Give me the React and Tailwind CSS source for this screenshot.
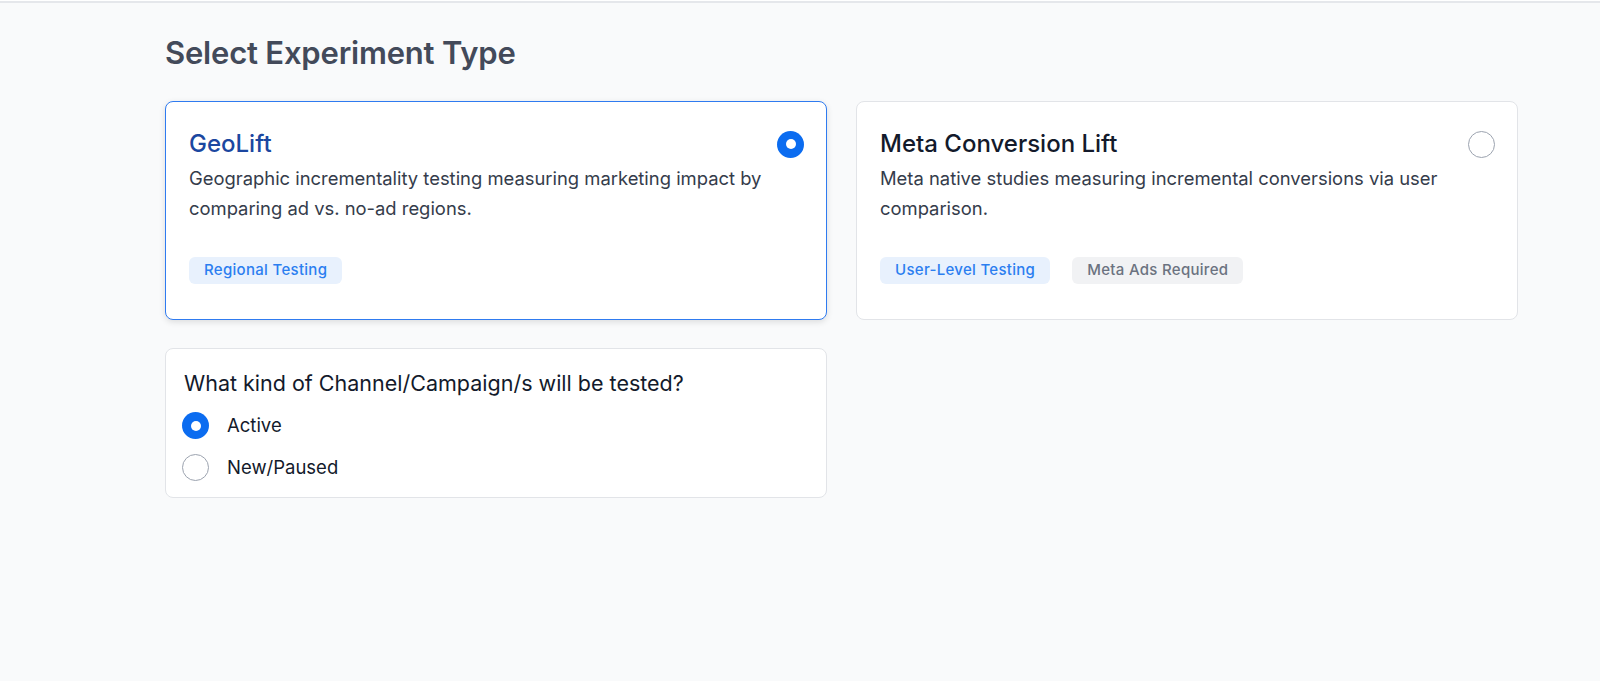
import React, { useState } from 'react';

const types = [
  {
    id: 'geolift',
    title: 'GeoLift',
    description: 'Geographic incrementality testing measuring marketing impact by comparing ad vs. no-ad regions.',
    tags: [{ label: 'Regional Testing', tone: 'blue' }],
  },
  {
    id: 'meta',
    title: 'Meta Conversion Lift',
    description: 'Meta native studies measuring incremental conversions via user comparison.',
    tags: [
      { label: 'User-Level Testing', tone: 'blue' },
      { label: 'Meta Ads Required', tone: 'gray' },
    ],
  },
];

function Radio({ checked }) {
  return checked ? (
    <span className="w-[27px] h-[27px] rounded-full bg-[#0b6cf0] flex items-center justify-center shrink-0">
      <span className="w-[10px] h-[10px] rounded-full bg-white" />
    </span>
  ) : (
    <span className="w-[27px] h-[27px] rounded-full border-[1.5px] border-[#9ca3af] bg-white shrink-0" />
  );
}

export default function App() {
  const [type, setType] = useState('geolift');
  const [campaign, setCampaign] = useState('active');

  return (
    <div className="min-h-[681px] bg-[#f9fafb] font-['Inter',sans-serif]">
      <div className="h-px bg-white" />
      <div className="h-[2px] bg-[#e5e7eb]" />
      <div className="pl-[165px] w-[1518px] pt-[31px]">
        <h1 className="text-[31px] leading-[38px] font-semibold text-[#434a5a] tracking-[-0.2px]">Select Experiment Type</h1>

        <div className="grid grid-cols-2 gap-[29px] mt-[29px]">
          {types.map((t) => {
            const selected = type === t.id;
            return (
              <div
                key={t.id}
                onClick={() => setType(t.id)}
                className={`cursor-pointer h-[219px] rounded-lg bg-white pl-[23px] pr-[22px] pt-[26px] border ${
                  selected ? 'border-[#2f7bf0] shadow-[0_2px_6px_rgba(0,0,0,0.12)]' : 'border-[#e2e4e8]'
                }`}
              >
                <div className="flex items-center justify-between">
                  <h2 className={`text-[24px] leading-[32px] font-medium ${selected ? 'text-[#1b47a0]' : 'text-[#131a2b]'}`}>
                    {t.title}
                  </h2>
                  <Radio checked={selected} />
                </div>
                <p className="mt-[4px] text-[18.4px] leading-[29.5px] text-[#353c4b] pr-[20px]">{t.description}</p>
                <div className="flex gap-[22px] mt-[34px]">
                  {t.tags.map((tag) => (
                    <span
                      key={tag.label}
                      className={`h-[27px] px-[15px] rounded-md flex items-center text-[15px] font-medium tracking-[0.3px] ${
                        tag.tone === 'blue' ? 'bg-[#e8f1fd] text-[#2b7ef0]' : 'bg-[#f1f2f4] text-[#6b7280]'
                      }`}
                    >
                      {tag.label}
                    </span>
                  ))}
                </div>
              </div>
            );
          })}
        </div>

        <div className="mt-[28px] w-[662px] h-[150px] rounded-lg bg-white border border-[#e2e4e8] pl-[16px] pt-[20px]">
          <h3 className="pl-[2px] text-[21.5px] leading-[28px] text-[#131a2b]">What kind of Channel/Campaign/s will be tested?</h3>
          <div className="mt-[15px] flex flex-col gap-[14px]">
            {[
              { id: 'active', label: 'Active' },
              { id: 'new', label: 'New/Paused' },
            ].map((o) => (
              <label key={o.id} className="flex items-center gap-[18px] cursor-pointer" onClick={() => setCampaign(o.id)}>
                <Radio checked={campaign === o.id} />
                <span className="text-[18.5px] text-[#131a2b]">{o.label}</span>
              </label>
            ))}
          </div>
        </div>
      </div>
    </div>
  );
}
